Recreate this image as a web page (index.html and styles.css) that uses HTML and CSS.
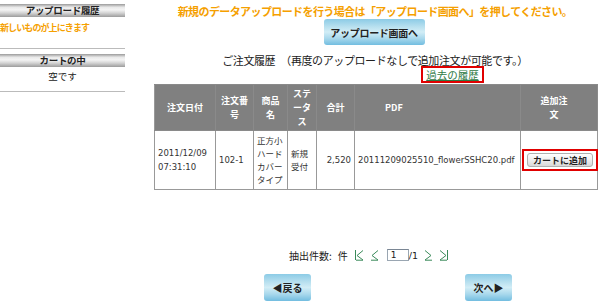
FILE: index.html
```html
<!DOCTYPE html>
<html lang="ja">
<head>
<meta charset="utf-8">
<link rel="stylesheet" href="styles.css">
</head>
<body>
<div class="page">
  <aside class="side">
    <div class="side-bar">アップロード履歴</div>
    <div class="side-note">新しいものが上にきます</div>
    <hr class="side-rule">
    <div class="side-bar">カートの中</div>
    <div class="side-empty">空です</div>
    <hr class="side-rule">
  </aside>
  <main class="main">
    <p class="notice">新規のデータアップロードを行う場合は「アップロード画面へ」を押してください。</p>
    <div class="center"><span class="btn-blue btn-upload">アップロード画面へ</span></div>
    <p class="history-title">ご注文履歴　（再度のアップロードなしで追加注文が可能です。）</p>
    <div class="past-row"><a class="past-link" href="#">過去の履歴</a></div>
    <table class="orders">
      <colgroup>
        <col class="w-date"><col class="w-no"><col class="w-name"><col class="w-status"><col class="w-total"><col class="w-pdf"><col class="w-add">
      </colgroup>
      <thead>
        <tr>
          <th>注文日付</th>
          <th>注文番<br>号</th>
          <th>商品<br>名</th>
          <th>ステ<br>ータ<br>ス</th>
          <th>合計</th>
          <th class="c-pdf">PDF</th>
          <th class="c-add">追加注<br>文</th>
        </tr>
      </thead>
      <tbody>
        <tr>
          <td>2011/12/09<br>07:31:10</td>
          <td>102-1</td>
          <td class="jp">正方小<br>ハード<br>カバー<br>タイプ</td>
          <td class="jp">新規<br>受付</td>
          <td class="num">2,520</td>
          <td>20111209025510_flowerSSHC20.pdf</td>
          <td class="add-cell"><span class="cart-box"><span class="cart-btn">カートに追加</span></span></td>
        </tr>
      </tbody>
    </table>
    <div class="pager">
      <span>抽出件数:</span><span class="pg-ken">件</span>
      <svg class="pg-ico" width="10" height="12" viewBox="0 0 10 12"><path d="M1.5 1v10M9 1.5L3 6.5l6 4.5M2 11.2h7" fill="none" stroke="#3a8a5a" stroke-width="1"/></svg>
      <svg class="pg-ico" width="9" height="12" viewBox="0 0 9 12"><path d="M8 1.5L2 6.5l6 4.5M1 11.2h7" fill="none" stroke="#3a8a5a" stroke-width="1"/></svg>
      <span class="pg-input">1</span><span class="pg-total">/1</span>
      <svg class="pg-ico" width="9" height="12" viewBox="0 0 9 12"><path d="M1 1.5l6 5-6 4.5M1 11.2h7" fill="none" stroke="#3a8a5a" stroke-width="1"/></svg>
      <svg class="pg-ico" width="10" height="12" viewBox="0 0 10 12"><path d="M8.5 1v10M1 1.5l6 5-6 4.5M1 11.2h7" fill="none" stroke="#3a8a5a" stroke-width="1"/></svg>
    </div>
    <div class="nav">
      <span class="btn-blue btn-nav">◀戻る</span>
      <span class="btn-blue btn-nav">次へ▶</span>
    </div>
  </main>
</div>
</body>
</html>
```
FILE: styles.css
```css
* { box-sizing: border-box; }
body {
  margin: 0;
  background: #fff;
  font-family: "Noto Sans CJK JP", "DejaVu Sans", sans-serif;
  font-size: 10px;
  color: #333;
}
.page {
  display: flex;
  width: 599px;
  height: 307px;
  overflow: hidden;
}
.side {
  width: 125px;
  flex: none;
  padding-top: 4px;
}
.side-bar {
  height: 13px;
  line-height: 13px;
  background: linear-gradient(#9a9a9a, #e9e9e9 25%, #f4f4f4 45%, #d2d2d2 70%, #9c9c9c);
  text-align: center;
  font-weight: bold;
  font-size: 9.5px;
  color: #222;
  letter-spacing: -0.3px;
}
.side-note {
  color: #f5a000;
  font-weight: bold;
  font-size: 9px;
  letter-spacing: -0.9px;
  margin-top: 4px;
  height: 27px;
}
.side-rule {
  border: 0;
  border-top: 1px solid #bbb;
  margin: 0 0 5px 0;
  height: 0;
}
.side-empty {
  text-align: center;
  font-size: 9.5px;
  margin-top: 2px;
  height: 22px;
  color: #222;
}
.main {
  flex: 1;
  padding-left: 27px;
  padding-right: 4px;
}
.notice {
  margin: 4px 0 0 0;
  text-align: center;
  color: #f5a000;
  font-weight: bold;
  font-size: 11px;
  letter-spacing: -0.6px;
  line-height: 14px;
}
.center {
  display: flex;
  justify-content: center;
  margin-top: 1px;
}
.btn-blue {
  display: inline-flex;
  align-items: center;
  justify-content: center;
  border-radius: 3px;
  background: linear-gradient(#8ccbe6, #b8e0ef 30%, #d2edf6 50%, #a8d8ec 75%, #72bde0);
  color: #222;
  font-weight: bold;
}
.btn-upload {
  width: 101px;
  height: 26px;
  font-size: 10px;
  letter-spacing: -0.3px;
  margin-right: 2px;
}
.history-title {
  margin: 8px 0 0 0;
  text-align: center;
  font-size: 11px;
  color: #222;
  line-height: 14px;
  letter-spacing: -0.4px;
}
.past-row {
  display: flex;
  justify-content: flex-start;
  padding-left: 269px;
  height: 16px;
}
.past-link {
  display: inline-block;
  border: 2px solid #e00000;
  padding: 0 2px;
  height: 17px;
  line-height: 13px;
  color: #2f7a45;
  font-size: 10.5px;
  text-decoration: underline;
  width: 63px;
  text-align: center;
  margin-top: -1px;
}
.orders {
  border-collapse: collapse;
  table-layout: fixed;
  width: 443px;
  margin-left: 2px;
  margin-top: 1px;
  font-family: "DejaVu Sans", "Noto Sans CJK JP", sans-serif;
  font-size: 8.5px;
  color: #333;
}
.w-date { width: 61px; }
.w-no { width: 38px; }
.w-name { width: 34px; }
.w-status { width: 29px; }
.w-total { width: 38px; }
.w-pdf { width: 166px; }
.w-add { width: 77px; }
.orders th {
  background: #808080;
  color: #fff;
  font-family: "Noto Sans CJK JP", sans-serif;
  font-weight: bold;
  font-size: 9px;
  line-height: 14px;
  height: 46px;
  border: 1px solid #8a8a8a;
  border-left: 1px solid #999;
  padding: 0 2px;
  text-align: center;
}
.orders th.c-pdf { text-align: left; padding-left: 30px; }
.orders th.c-add { padding-right: 12px; }
.orders td {
  border: 1px solid #999;
  height: 59px;
  padding: 0 3px;
  vertical-align: middle;
  line-height: 14px;
}
.orders td.jp {
  font-family: "Noto Sans CJK JP", sans-serif;
  font-size: 8.5px;
  line-height: 13px;
}
.orders td.num { text-align: right; }
.add-cell { padding: 0 !important; }
.cart-box {
  display: inline-block;
  border: 2px solid #e00000;
  padding: 2px 3px;
  margin-left: 1px;
}
.cart-btn {
  display: block;
  width: 66px;
  height: 14px;
  line-height: 13px;
  border: 1px solid #b0b0b0;
  border-radius: 3px;
  background: linear-gradient(#fff, #ececec 55%, #d8d8d8);
  text-align: center;
  font-family: "Noto Sans CJK JP", sans-serif;
  font-size: 9px;
  font-weight: bold;
  color: #222;
}
.pager {
  display: flex;
  align-items: center;
  margin-top: 58px;
  padding-left: 137px;
  height: 14px;
  font-size: 10px;
  color: #222;
  gap: 4px;
}
.pg-ken { margin-left: 2px; }
.pg-ico { margin-left: 2px; }
.pg-input {
  display: inline-block;
  width: 22px;
  height: 12px;
  border: 1px solid #9aa6b2;
  border-top-color: #7a8694;
  font-size: 9px;
  line-height: 10px;
  padding-left: 3px;
  margin-left: 4px;
  font-family: "DejaVu Sans", sans-serif;
}
.pg-total {
  margin-left: -4px;
  font-family: "DejaVu Sans", sans-serif;
  font-size: 9.5px;
}
.nav {
  display: flex;
  margin-top: 12px;
  padding-left: 112px;
  gap: 154px;
}
.btn-nav {
  width: 47px;
  height: 27px;
  font-size: 10px;
}
```
